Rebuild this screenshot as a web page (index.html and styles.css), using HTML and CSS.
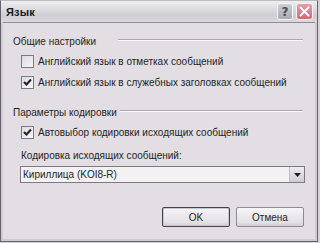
FILE: index.html
```html
<!DOCTYPE html>
<html lang="ru">
<head>
<meta charset="utf-8">
<title>Язык</title>
<link rel="stylesheet" href="styles.css">
</head>
<body>
<div class="window">
  <div class="titlebar">
    <span class="title">Язык</span>
    <div class="tbuttons">
      <span class="tb help">?</span>
      <span class="tb close">
        <svg width="11" height="11" viewBox="0 0 11 11"><path d="M1.5 1.5 L9.5 9.5 M9.5 1.5 L1.5 9.5" stroke="#fff" stroke-width="2" stroke-linecap="round"/></svg>
      </span>
    </div>
  </div>
  <div class="client">
    <div class="group-head g1"><span class="gtext">Общие настройки</span><span class="gline"></span></div>
    <label class="check r1"><span class="box"></span><span>Английский язык в отметках сообщений</span></label>
    <label class="check r2"><span class="box on"><svg width="9" height="9" viewBox="0 0 9 9"><path d="M1 4 L3.5 6.5 L8 1.5" fill="none" stroke="#202020" stroke-width="2"/></svg></span><span>Английский язык в служебных заголовках сообщений</span></label>
    <div class="group-head g2"><span class="gtext">Параметры кодировки</span><span class="gline"></span></div>
    <label class="check r3"><span class="box on"><svg width="9" height="9" viewBox="0 0 9 9"><path d="M1 4 L3.5 6.5 L8 1.5" fill="none" stroke="#202020" stroke-width="2"/></svg></span><span>Автовыбор кодировки исходящих сообщений</span></label>
    <div class="field-label">Кодировка исходящих сообщений:</div>
    <div class="combo"><span class="combo-text">Кириллица (KOI8-R)</span><span class="combo-btn"><svg width="7" height="4" viewBox="0 0 7 4"><path d="M0 0 H7 L3.5 4 Z" fill="#202020"/></svg></span></div>
    <div class="actions">
      <span class="btn default">OK</span>
      <span class="btn">Отмена</span>
    </div>
  </div>
</div>
</body>
</html>
```
FILE: styles.css
```css
html, body { margin: 0; padding: 0; }
body {
  width: 318px; height: 243px; overflow: hidden;
  background: #d6d2d8;
  font-family: "Liberation Sans", "DejaVu Sans", sans-serif;
  font-size: 10px; color: #1e1e22;
  white-space: nowrap;
}
.window {
  box-sizing: border-box;
  width: 318px; height: 242px;
  display: flex; flex-direction: column;
  background: #cfccd3;
  border: 1px solid #66626c;
  border-top-color: #bdbac2;
}
.titlebar {
  height: 21px;
  display: flex; align-items: center; justify-content: space-between;
  padding: 0 4px 0 5px;
  background: linear-gradient(#eeedf0, #d9d8dc 45%, #cfcdd3 70%, #dcdadf);
}
.title { font-weight: bold; font-size: 11px; color: #1a1a1e; letter-spacing: 0.2px; }
.tbuttons { display: flex; gap: 3px; }
.tb {
  box-sizing: border-box;
  width: 17px; height: 17px; border-radius: 3px;
  display: flex; align-items: center; justify-content: center;
  border: 1px solid #f4f4f6;
}
.help {
  background: linear-gradient(#cfd0d6, #a9aab2);
  color: #4a4a50; font-weight: bold; font-size: 12px;
  font-family: "DejaVu Sans", sans-serif;
  width: 16px;
}
.close { background: linear-gradient(#e99aa6, #d66878); }
.client {
  flex: 1;
  margin: 0 2px 2px;
  background: #e3dee4;
  border-top: 1px solid #8f8b94;
  padding: 12px 10px 0 10px;
  display: flex; flex-direction: column;
}
.group-head { display: flex; align-items: center; height: 13px; line-height: 13px; }
.g1 .gtext { min-width: 102px; }
.gline {
  flex: 1; margin-left: 3px; margin-right: 2px;
  border-top: 1px solid #aaa6ae; border-bottom: 1px solid #fbf9fc;
  margin-top: -3px;
}
.check { display: flex; align-items: center; height: 13px; line-height: 13px; padding-left: 8px; gap: 4px; }
.r1 { margin-top: 7px; }
.r2 { margin-top: 8px; }
.g2 { margin-top: 17px; }
.r3 { margin-top: 7px; }
.box {
  box-sizing: border-box; width: 13px; height: 13px;
  border: 1px solid #7c7a86;
  background: linear-gradient(135deg, #dcdbe0, #f8f8fa);
  display: flex; align-items: center; justify-content: center;
}
.field-label { margin-top: 10px; height: 13px; line-height: 13px; padding-left: 8px; }
.combo {
  box-sizing: border-box;
  margin: 4px 0 0 7px; width: 285px; height: 17px;
  border: 1px solid #7b7882;
  background: #f4f1f5;
  display: flex; align-items: center; justify-content: space-between;
}
.combo-text { padding-left: 2px; }
.combo-btn {
  box-sizing: border-box; width: 15px; height: 15px;
  display: flex; align-items: center; justify-content: center;
  background: linear-gradient(#eeecf0, #cfccd4);
  border-left: 1px solid #c2bfc8;
}
.actions { margin-top: 24px; display: flex; justify-content: flex-end; gap: 6px; padding-right: 1px; }
.btn {
  box-sizing: border-box; width: 68px; height: 20px;
  display: flex; align-items: center; justify-content: center;
  background: linear-gradient(#f6f5f8, #e3e0e6 80%, #cfccd4);
  border: 1px solid #8d8a94; border-radius: 2px;
}
.btn.default { border: 1px solid #45424a; box-shadow: inset 0 0 0 1px #c8c5ce; }
```
